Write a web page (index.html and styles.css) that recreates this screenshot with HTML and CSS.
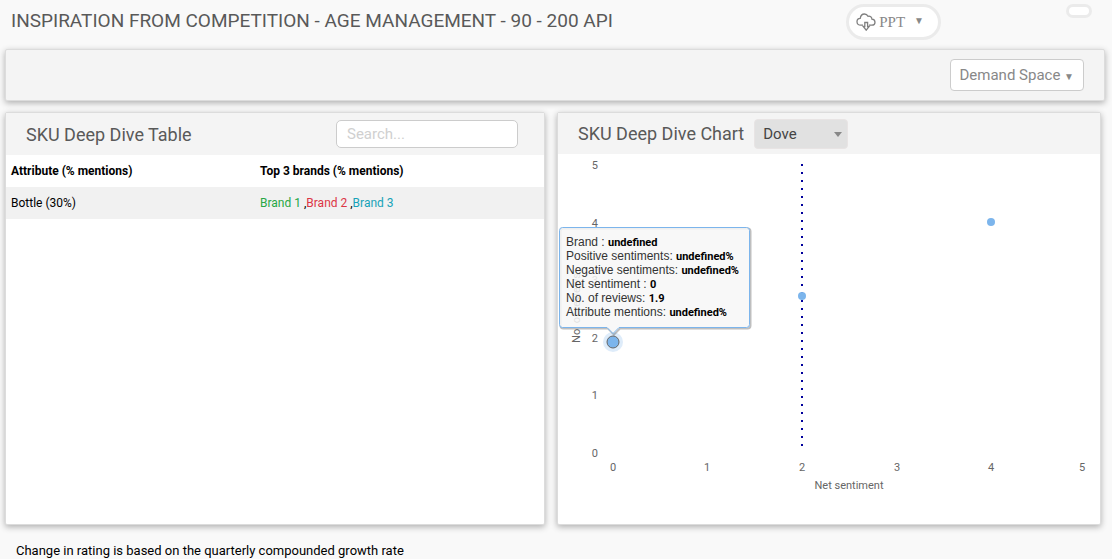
FILE: index.html
```html
<!DOCTYPE html>
<html lang="en">
<head>
<meta charset="utf-8">
<meta name="viewport" content="width=device-width, initial-scale=1">
<title>Inspiration from competition</title>
<link rel="stylesheet" href="styles.css">
</head>
<body>
<header class="page-header">
  <h1 class="page-title">INSPIRATION FROM COMPETITION - AGE MANAGEMENT - 90 - 200 API</h1>
  <div class="header-actions">
    <button class="export-button" type="button">
      <svg class="cloud-icon" viewBox="0 0 20 18" aria-hidden="true">
        <path d="M7 12.2H4.8C2.500 12.200 1 10.800 1 8.700C1 6.800 2.300 5.500 4.200 5.400C4.600 2.700 6.200 1 8.400 1C10.200 1 11.300 1.800 12 3.300C14.200 2.700 15.900 4.200 15.900 6.200C17.800 6.300 19 7.500 19 9.200C19 11 17.700 12.200 15.900 12.200H13"/>
        <path d="M8.800 9.500H11.600V13.500H13.200L10.200 17.200L7.200 13.500H8.800Z"/>
      </svg>
      <span>PPT</span>
      <span class="export-caret">▼</span>
    </button>
    <button class="pill-button" type="button" aria-label="More"></button>
  </div>
</header>
<section class="card toolbar">
  <button class="filter-button" type="button">Demand Space <span class="filter-caret">▼</span></button>
</section>
<main class="panels">
  <section class="card">
    <div class="panel-header table-header">
      <h2 class="panel-title">SKU Deep Dive Table</h2>
      <input class="search" type="text" placeholder="Search..." aria-label="Search">
    </div>
    <table class="sku-table">
      <thead>
        <tr><th>Attribute (% mentions)</th><th>Top 3 brands (% mentions)</th></tr>
      </thead>
      <tbody>
        <tr>
          <td>Bottle (30%)</td>
          <td><span class="green">Brand 1</span> ,<span class="red">Brand 2</span> ,<span class="teal">Brand 3</span></td>
        </tr>
      </tbody>
    </table>
  </section>
  <section class="card">
    <div class="panel-header chart-header">
      <h2 class="panel-title">SKU Deep Dive Chart</h2>
      <div class="select-wrap">
        <select class="brand-select" aria-label="Brand"><option>Dove</option></select>
      </div>
    </div>
    <svg class="chart" viewBox="0 0 542 370" role="img" aria-label="Number of reviews by net sentiment">
      <g class="axis" text-anchor="end">
        <text x="40" y="15">5</text>
        <text x="40" y="73">4</text>
        <text x="40" y="130">3</text>
        <text x="40" y="188">2</text>
        <text x="40" y="245">1</text>
        <text x="40" y="303">0</text>
      </g>
      <g class="axis" text-anchor="middle">
        <text x="55" y="317">0</text>
        <text x="149" y="317">1</text>
        <text x="244" y="317">2</text>
        <text x="339" y="317">3</text>
        <text x="433" y="317">4</text>
        <text x="524" y="317">5</text>
        <text x="291" y="335">Net sentiment</text>
        <text transform="translate(22 154) rotate(-90)">No. of reviews</text>
      </g>
      <path class="median" d="M244 10V293"/>
      <circle class="point" cx="244" cy="142" r="4"/>
      <circle class="point" cx="433" cy="68" r="4"/>
      <circle class="halo" cx="55" cy="188" r="10"/>
      <circle class="active-point" cx="55" cy="188" r="6"/>
      <path class="tip-shadow" d="M4.500 73.500H188.500Q191.500 73.500 191.500 76.500V170.500Q191.500 173.500 188.500 173.500H61L55 179.500L49 173.500H4.500Q1.500 173.500 1.500 170.500V76.500Q1.500 73.500 4.500 73.500Z"/>
      <path class="tip-box" d="M4.500 73.500H188.500Q191.500 73.500 191.500 76.500V170.500Q191.500 173.500 188.500 173.500H61L55 179.500L49 173.500H4.500Q1.500 173.500 1.500 170.500V76.500Q1.500 73.500 4.500 73.500Z"/>
      <g class="tip-text">
        <text x="8" y="92">Brand : <tspan class="tip-value">undefined</tspan></text>
        <text x="8" y="106">Positive sentiments: <tspan class="tip-value">undefined%</tspan></text>
        <text x="8" y="120">Negative sentiments: <tspan class="tip-value">undefined%</tspan></text>
        <text x="8" y="134">Net sentiment : <tspan class="tip-value">0</tspan></text>
        <text x="8" y="148">No. of reviews: <tspan class="tip-value">1.9</tspan></text>
        <text x="8" y="162">Attribute mentions: <tspan class="tip-value">undefined%</tspan></text>
      </g>
    </svg>
  </section>
</main>
<p class="footnote">Change in rating is based on the quarterly compounded growth rate</p>
</body>
</html>
```
FILE: styles.css
```css
* { box-sizing: border-box; }

body {
  margin: 0;
  background: #f9f9f9;
  color: #000;
  font-family: Roboto, "Liberation Sans", sans-serif;
  font-size: 12px;
}

button, input, select { font-family: inherit; }

.page-header {
  display: flex;
  justify-content: space-between;
  align-items: flex-start;
  height: 49px;
  padding: 4px 20px 0 11px;
}

.page-title {
  margin: 4px 0 0;
  color: #595959;
  font-size: 19px;
  font-weight: 400;
  line-height: 26px;
}

.header-actions {
  display: flex;
  align-items: flex-start;
  gap: 125px;
}

.export-button {
  display: flex;
  align-items: center;
  gap: 3px;
  height: 36px;
  padding: 0 14px 0 7px;
  border: 3px solid #ebebeb;
  border-radius: 18px;
  background: #fff;
  color: #888;
  font-family: "Liberation Serif", serif;
  font-size: 15px;
}

.cloud-icon {
  width: 20px;
  height: 18px;
  fill: none;
  stroke: #808080;
  stroke-width: 1.3;
}

.export-caret {
  margin: 0 0 3px 6px;
  font-size: 10px;
}

.pill-button {
  width: 26px;
  height: 14px;
  padding: 0;
  border: 3px solid #ebebeb;
  border-radius: 7px;
  background: #fff;
}

.card {
  border: 1px solid #dcdcdc;
  border-radius: 2px;
  background: #fff;
  box-shadow: 0 2px 6px rgba(0, 0, 0, 0.3);
}

.toolbar {
  display: flex;
  justify-content: flex-end;
  margin: 0 7px 0 5px;
  padding: 9px 20px;
  background: #f4f4f4;
}

.filter-button {
  height: 32px;
  padding: 0 9px;
  border: 1px solid #ccc;
  border-radius: 4px;
  background: #fff;
  color: #888;
  font-size: 15px;
}

.filter-caret { font-size: 10px; }

.panels {
  display: grid;
  grid-template-columns: 540fr 544fr;
  gap: 12px;
  margin: 11px 11px 0 5px;
}

.panel-header {
  display: flex;
  align-items: center;
  background: #f4f4f4;
}

.table-header {
  justify-content: space-between;
  height: 42px;
  padding: 0 26px 0 20px;
}

.chart-header {
  gap: 10px;
  height: 41px;
  padding: 0 20px;
}

.panel-title {
  margin: 0;
  color: #595959;
  font-size: 18px;
  font-weight: 400;
}

.search {
  width: 182px;
  height: 28px;
  padding: 0 10px;
  border: 1px solid #ccc;
  border-radius: 5px;
  background: #fff;
  font-size: 15px;
}

.search::placeholder { color: #d0d0d0; }

.select-wrap { position: relative; }

.select-wrap::after {
  content: "";
  position: absolute;
  top: 13px;
  right: 6px;
  border: 4px solid transparent;
  border-top: 5px solid #888;
  border-bottom: 0;
  pointer-events: none;
}

.brand-select {
  display: block;
  appearance: none;
  width: 94px;
  height: 30px;
  padding: 0 8px;
  border: 1px solid #e8e4e4;
  border-radius: 4px;
  background: #e1e1e1;
  color: #444;
  font-size: 15px;
}

.sku-table {
  width: 100%;
  table-layout: fixed;
  border-collapse: collapse;
}

.sku-table th,
.sku-table td {
  height: 32px;
  padding: 0 5px;
  text-align: left;
}

.sku-table th:first-child { width: 249px; }
.sku-table tbody tr { background: #f1f1f1; }

.green { color: #28a745; }
.red { color: #dc3545; }
.teal { color: #17a2b8; }

.chart {
  display: block;
  width: 100%;
}

.axis {
  fill: #666;
  font-size: 11px;
}

.median {
  fill: none;
  stroke: #00009c;
  stroke-width: 2;
  stroke-dasharray: 2 6;
}

.point { fill: #7cb5ec; }

.halo {
  fill: #7cb5ec;
  fill-opacity: 0.25;
}

.active-point {
  fill: #7cb5ec;
  stroke: #666;
}

.tip-shadow {
  fill: none;
  stroke: rgba(0, 0, 0, 0.25);
  stroke-width: 2;
  transform: translate(1px, 1px);
}

.tip-box {
  fill: rgba(247, 247, 247, 0.85);
  stroke: #7cb5ec;
}

.tip-text {
  fill: #333;
  font-family: "Liberation Sans", Arial, sans-serif;
  font-size: 12px;
}

.tip-value {
  fill: #000;
  font-family: Roboto, sans-serif;
  font-size: 11px;
  font-weight: 700;
}

.footnote {
  margin: 17px 16px;
  font-size: 13px;
  line-height: 18px;
}
```
